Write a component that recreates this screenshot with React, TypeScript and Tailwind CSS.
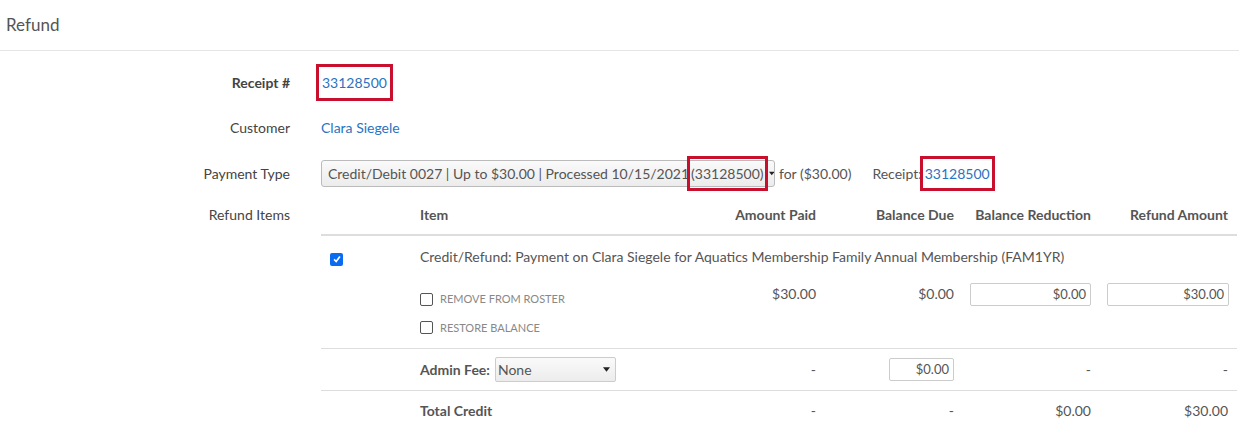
import React from 'react'

const box = 'outline outline-[3px] outline-[#c8102e] -outline-offset-0'

function Label({ children }: { children: React.ReactNode }) {
  return <div className="w-[290px] shrink-0 text-right text-[14px] text-[#444]">{children}</div>
}

function Check({ checked }: { checked?: boolean }) {
  if (checked)
    return (
      <span className="inline-flex h-[13px] w-[13px] items-center justify-center rounded-[2px] bg-[#0b6bf0]">
        <svg viewBox="0 0 12 12" className="h-[10px] w-[10px]">
          <path d="M2.5 6.5 5 9 9.5 3" stroke="white" strokeWidth="2" fill="none" />
        </svg>
      </span>
    )
  return <span className="inline-block h-[13px] w-[13px] rounded-[2px] border border-[#555] bg-white" />
}

function Money({ value, w }: { value: string; w: string }) {
  return (
    <div className={`${w} h-[23px] rounded-[2px] border border-[#ccc] bg-white pr-1 text-right text-[13px] leading-[21px] text-[#555]`}>
      {value}
    </div>
  )
}

const grid = 'grid grid-cols-[90px_304px_110px_138px_137px_137px]'

export default function App() {
  return (
    <div className="min-h-screen bg-white text-[#444] font-[Lato,sans-serif]">
      <div className="h-[51px] border-b border-[#e5e5e5] px-[6px] pt-[12px] text-[17px] text-[#555]">Refund</div>

      <div className="flex items-center pt-[16px]">
        <Label><span className="font-bold">Receipt #</span></Label>
        <div className="pl-[29px]">
          <span className={`inline-block px-[3px] py-[5px] text-[14px] text-[#2a73c1] ${box}`}>33128500</span>
        </div>
      </div>

      <div className="mt-[19px] flex items-center">
        <Label>Customer</Label>
        <div className="pl-[31px] text-[14px] text-[#2a73c1]">Clara Siegele</div>
      </div>

      <div className="mt-[21px] flex items-center whitespace-nowrap text-[14px]">
        <Label>Payment Type</Label>
        <div className="ml-[31px] flex h-[27px] w-[454px] items-center rounded-[3px] border border-[#bbb] bg-gradient-to-b from-[#fafafa] to-[#ececec] pl-[6px] text-[#555]">
          <span>Credit/Debit 0027 | Up to $30.00 | Processed 10/15/2021</span>
          <span className={`ml-[1px] px-[1px] py-[4px] ${box}`}>(33128500)</span>
          <svg viewBox="0 0 8 5" className="ml-[4px] h-[5px] w-[8px]"><path d="M0 0h8L4 5z" fill="#222" /></svg>
        </div>
        <span className="ml-[4px] text-[#555]">for ($30.00)</span>
        <span className="ml-[21px] text-[#555]">Receipt:</span>
        <span className={`ml-[1px] px-[2px] py-[4px] text-[#2a73c1] ${box}`}>33128500</span>
      </div>

      <div className="mt-[16px] flex items-start">
        <Label>Refund Items</Label>
        <div className="ml-[31px] w-[916px] text-[14px]">
          <div className={`${grid} whitespace-nowrap border-b-2 border-[#ddd] pb-[9px] font-bold text-[#555]`}>
            <div />
            <div className="pl-[9px]">Item</div>
            <div className="pr-[9px] text-right">Amount Paid</div>
            <div className="pr-[9px] text-right">Balance Due</div>
            <div className="pr-[9px] text-right">Balance Reduction</div>
            <div className="pr-[9px] text-right">Refund Amount</div>
          </div>

          <div className="border-b border-[#ddd] pb-[12px]">
            <div className={`${grid} pt-[10px]`}>
              <div className="pl-[9px] pt-[2px]"><Check checked /></div>
              <div className="col-span-5 pl-[9px] text-[#555]">Credit/Refund: Payment on Clara Siegele for Aquatics Membership Family Annual Membership (FAM1YR)</div>
            </div>
            <div className={`${grid} pt-[14px]`}>
              <div />
              <div className="pl-[9px] text-[11px] uppercase text-[#888]">
                <div className="flex items-center gap-[7px] pt-[8px]"><Check /> Remove from Roster</div>
                <div className="mt-[12px] flex items-center gap-[7px]"><Check /> Restore Balance</div>
              </div>
              <div className="pr-[9px] text-right text-[#555]">$30.00</div>
              <div className="pr-[9px] text-right text-[#555]">$0.00</div>
              <div className="flex justify-end pr-[9px]"><Money value="$0.00" w="w-[121px]" /></div>
              <div className="flex justify-end pr-[8px]"><Money value="$30.00" w="w-[122px]" /></div>
            </div>
          </div>

          <div className={`${grid} h-[42px] items-center border-b border-[#ddd] text-[#555]`}>
            <div />
            <div className="flex items-center pl-[9px]">
              <span className="font-bold">Admin Fee:</span>
              <div className="ml-[5px] flex h-[25px] w-[121px] items-center justify-between rounded-[2px] border border-[#ccc] bg-gradient-to-b from-[#fafafa] to-[#ececec] px-[2px] pr-[5px]">
                <span>None</span>
                <svg viewBox="0 0 8 5" className="h-[5px] w-[7px]"><path d="M0 0h8L4 5z" fill="#222" /></svg>
              </div>
            </div>
            <div className="pr-[9px] text-right">-</div>
            <div className="flex justify-end pr-[9px]"><Money value="$0.00" w="w-[65px]" /></div>
            <div className="pr-[9px] text-right">-</div>
            <div className="pr-[9px] text-right">-</div>
          </div>

          <div className={`${grid} h-[38px] items-center text-[#555]`}>
            <div />
            <div className="pl-[9px] font-bold">Total Credit</div>
            <div className="pr-[9px] text-right">-</div>
            <div className="pr-[9px] text-right">-</div>
            <div className="pr-[9px] text-right">$0.00</div>
            <div className="pr-[9px] text-right">$30.00</div>
          </div>
        </div>
      </div>
    </div>
  )
}
